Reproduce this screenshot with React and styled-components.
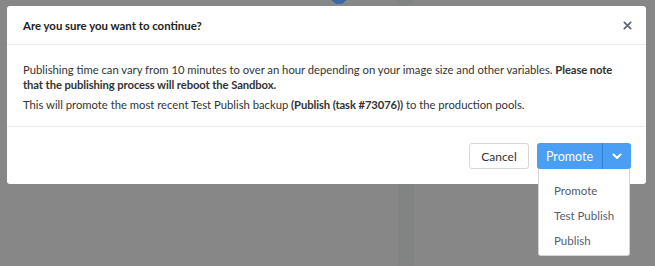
import React, { useState } from 'react';
import styled, { createGlobalStyle } from 'styled-components';

const GlobalStyle = createGlobalStyle`
    html, body {
        margin: 0;
        padding: 0;
        height: 100%;
    }
    body {
        font-family: "Lato", "Open Sans", sans-serif;
        background:
            radial-gradient(circle at 339px -4px, #3b68a8 0 8px, transparent 8.5px),
            linear-gradient(90deg, transparent 398px, #828383 398px, #828383 414px, transparent 414px),
            #878787;
    }
`;

const Page = styled.div`
    height: 266px;
    padding: 6px 0 0 7px;
    box-sizing: border-box;
`;

const Modal = styled.div`
    width: 639px;
    background: #fff;
    border-radius: 3px;
    color: #333;
`;

const Header = styled.div`
    display: flex;
    align-items: center;
    justify-content: space-between;
    height: 38px;
    padding: 0 16px;
    border-bottom: 1px solid #ececec;

    h3 {
        margin: 0;
        font-size: 11.4px;
        font-weight: 700;
        color: #222;
    }
`;

const CloseButton = styled.button`
    display: flex;
    align-items: center;
    justify-content: center;
    padding: 0;
    margin-right: -2px;
    background: transparent;
    border: none;
    cursor: pointer;
    svg {
        width: 9px;
        height: 9px;
    }
`;

const Body = styled.div`
    padding: 17px 16px 14px;
    border-bottom: 1px solid #ececec;

    p {
        margin: 0 0 5px;
        font-size: 11.25px;
        line-height: 15px;
    }
    p:last-child {
        margin-bottom: 0;
    }
    strong {
        font-weight: 700;
        letter-spacing: -0.1px;
    }
`;

const Footer = styled.div`
    display: flex;
    justify-content: flex-end;
    align-items: center;
    gap: 8px;
    padding: 16px 15px 15px;
`;

const Button = styled.button`
    height: 26px;
    width: 60px;
    padding: 0;
    font-family: inherit;
    font-size: 12px;
    border-radius: 3px;
    cursor: pointer;
    border: 1px solid #d6d6d6;
    background: #fff;
    color: #333;
`;

const Split = styled.div`
    position: relative;
    display: flex;
`;

const SplitPart = styled.button`
    height: 26px;
    border: none;
    background: #4a9ef4;
    color: #fff;
    font-family: inherit;
    font-size: 12.5px;
    cursor: pointer;
    display: flex;
    align-items: center;
    justify-content: center;
    width: ${p => (p.$caret ? '29px' : '65px')};
    border-radius: ${p => (p.$caret ? '0 3px 3px 0' : '3px 0 0 3px')};
    border-left: ${p => (p.$caret ? '1px solid #2f7fd6' : 'none')};
    svg {
        width: 10px;
        height: 7px;
    }
`;

const Menu = styled.ul`
    position: absolute;
    top: 26px;
    left: 1px;
    width: 92px;
    margin: 0;
    padding: 9px 0 2px;
    list-style: none;
    background: #fff;
    border: 1px solid #d4d4d4;
    border-top: none;
    border-radius: 0 0 3px 3px;
    box-sizing: border-box;
`;

const MenuItem = styled.li`
    padding: 0 0 0 15px;
    height: 25px;
    line-height: 25px;
    font-size: 11.5px;
    white-space: nowrap;
    color: #555e6e;
    cursor: pointer;
`;

const options = ['Promote', 'Test Publish', 'Publish'];

const App = () => {
    const [open] = useState(true);

    return (
        <>
            <GlobalStyle />
            <Page>
                <Modal>
                    <Header>
                        <h3>Are you sure you want to continue?</h3>
                        <CloseButton aria-label='Close'>
                            <svg viewBox='0 0 10 10'>
                                <path d='M1.5 1.5 L8.5 8.5 M8.5 1.5 L1.5 8.5' stroke='#5d6677' strokeWidth='2' strokeLinecap='round' />
                            </svg>
                        </CloseButton>
                    </Header>
                    <Body>
                        <p>
                            Publishing time can vary from 10 minutes to over an hour depending on your image size and other variables.{' '}
                            <strong>Please note that the publishing process will reboot the Sandbox.</strong>
                        </p>
                        <p>
                            This will promote the most recent Test Publish backup <strong>(Publish (task #73076))</strong> to the production pools.
                        </p>
                    </Body>
                    <Footer>
                        <Button type='button'>Cancel</Button>
                        <Split>
                            <SplitPart type='button'>Promote</SplitPart>
                            <SplitPart type='button' $caret aria-label='More options'>
                                <svg viewBox='0 0 10 7'>
                                    <path d='M1.5 1.5 L5 5 L8.5 1.5' stroke='#fff' strokeWidth='2' fill='none' strokeLinecap='round' strokeLinejoin='round' />
                                </svg>
                            </SplitPart>
                            {open && (
                                <Menu>
                                    {options.map(o => (
                                        <MenuItem key={o}>{o}</MenuItem>
                                    ))}
                                </Menu>
                            )}
                        </Split>
                    </Footer>
                </Modal>
            </Page>
        </>
    );
};

export default App;
